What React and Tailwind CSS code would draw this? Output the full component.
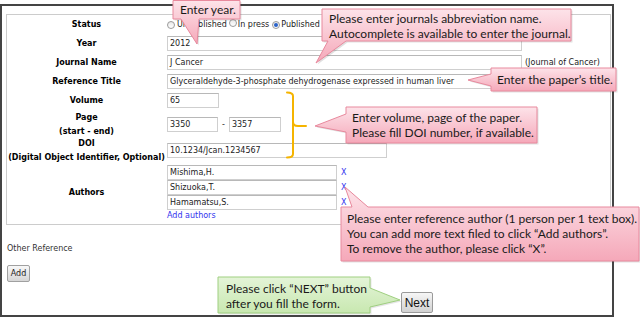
import React from "react";

const dv = "font-['DejaVu_Sans',sans-serif]";

function Input({ w, value }) {
  return (
    <div
      className={`${w} h-[15px] shrink-0 border border-[#cfcfcf] border-t-[#b8b8b8] bg-white pl-[2px] text-[8px] leading-[13px] text-[#222] whitespace-nowrap overflow-hidden`}
    >
      {value}
    </div>
  );
}

function Label({ children }) {
  return (
    <div className="w-[159px] shrink-0 text-center font-bold text-[8px] leading-[14px] text-black">
      {children}
    </div>
  );
}

function Radio({ checked }) {
  return (
    <span className="inline-flex w-[8px] h-[8px] rounded-full border border-[#9a9a9a] bg-gradient-to-b from-[#e8e8e8] to-white items-center justify-center">
      {checked && <span className="w-[4px] h-[4px] rounded-full bg-[#2a62c9]" />}
    </span>
  );
}

function Row({ h, label, children }) {
  return (
    <div className={`flex items-center ${h}`}>
      <Label>{label}</Label>
      <div className="flex items-center pl-[1px]">{children}</div>
    </div>
  );
}

export default function App() {
  const pink = "M173,0.5 H240 V19 H199 L197,44 L181,19 H173 Z";
  const journal = "M322,9 H571 V41 H346 L316,63 L328,41 H322 Z";
  const title = "M491,68 H616 V91 H491 V86 L468,80 L491,74 Z";
  const vol = "M346,107 H537 V143 H346 V132 L315,126 L346,114 Z";
  const auth = "M341,207 H352 L345,187 L368,207 H639 V261 H341 Z";
  const green = "M218,277 H370 V288 L400,300 L370,307 V313 H218 Z";
  const txt = "absolute font-['Lato',sans-serif] text-[12px] leading-[15px] text-[#1a1a1a] whitespace-nowrap";

  return (
    <div className={`relative w-[640px] h-[319px] bg-white overflow-hidden ${dv}`}>
      <div className="mt-[4px] w-[614px] h-[313px] border-2 border-[#444] flex flex-col">
        <div className="ml-[4px] mt-[8px] w-[605px] border border-[#cccccc] flex flex-col">
          <Row h="h-[19px]" label="Status">
            <div className="flex items-center text-[8px] text-[#222]">
              <Radio />
              <span className="ml-[2px]">Unpublished</span>
              <span className="ml-[2px]"><Radio /></span>
              <span className="ml-[1px]">In press</span>
              <span className="ml-[3px]"><Radio checked /></span>
              <span className="ml-[1px]">Published</span>
            </div>
          </Row>
          <Row h="h-[19px]" label="Year">
            <Input w="w-[355px]" value="2012" />
          </Row>
          <Row h="h-[19px]" label="Journal Name">
            <Input w="w-[355px]" value="J Cancer" />
            <span className="ml-[3px] text-[8px] text-[#222]">(Journal of Cancer)</span>
          </Row>
          <Row h="h-[19px]" label="Reference Title">
            <Input
              w="w-[355px]"
              value="Glyceraldehyde-3-phosphate dehydrogenase expressed in human liver"
            />
          </Row>
          <Row h="h-[19px]" label="Volume">
            <Input w="w-[52px]" value="65" />
          </Row>
          <Row
            h="h-[29px]"
            label={
              <>
                Page
                <br />
                (start - end)
              </>
            }
          >
            <Input w="w-[51px]" value="3350" />
            <span className="mx-[4px] text-[8px] text-[#222]">-</span>
            <Input w="w-[52px]" value="3357" />
          </Row>
          <Row
            h="h-[23px]"
            label={
              <>
                DOI
                <br />
                (Digital Object Identifier, Optional)
              </>
            }
          >
            <Input w="w-[220px]" value="10.1234/Jcan.1234567" />
          </Row>
          <div className="flex items-center h-[62px]">
            <Label>Authors</Label>
            <div className="flex flex-col pl-[1px] pt-[1px]">
              {["Mishima,H.", "Shizuoka,T.", "Hamamatsu,S."].map((a) => (
                <div key={a} className="flex items-center">
                  <Input w="w-[170px]" value={a} />
                  <span className="ml-[4px] text-[8px] text-[#3333ee]">X</span>
                </div>
              ))}
              <div className="text-[8px] leading-[12px] text-[#3333ee]">Add authors</div>
            </div>
          </div>
        </div>
        <div className="ml-[5px] mt-[18px] text-[8px] leading-[12px] text-[#333]">Other Reference</div>
        <div className="ml-[5px] mt-[10px] w-[23px] h-[17px] rounded-[2px] border border-[#a0a0a0] bg-gradient-to-b from-[#f8f8f8] to-[#d6d6d6] flex items-center justify-center text-[8px] text-[#222]">
          Add
        </div>
        <div className="ml-[399px] mt-[10px] w-[32px] h-[21px] rounded-[2px] border border-[#9a9a9a] bg-gradient-to-b from-[#f6f6f6] to-[#d2d2d2] flex items-center justify-center font-['Liberation_Sans',sans-serif] text-[12px] text-[#111]">
          Next
        </div>
      </div>

      <svg className="absolute left-0 top-0 pointer-events-none" width="640" height="319" viewBox="0 0 640 319">
        <defs>
          <linearGradient id="pk" x1="0" y1="0" x2="0" y2="1">
            <stop offset="0" stopColor="#fde3e9" />
            <stop offset="1" stopColor="#f5a8b9" />
          </linearGradient>
          <linearGradient id="gr" x1="0" y1="0" x2="0" y2="1">
            <stop offset="0" stopColor="#e4f4d8" />
            <stop offset="1" stopColor="#c8e8b0" />
          </linearGradient>
        </defs>
        {[pink, journal, title, vol, auth].map((d, i) => (
          <g key={i}>
            <path d={d} transform="translate(1.5,1.5)" fill="#000" opacity="0.12" />
            <path d={d} fill="url(#pk)" stroke="#e8899d" strokeWidth="1" />
          </g>
        ))}
        <path d={green} transform="translate(1.5,1.5)" fill="#000" opacity="0.1" />
        <path d={green} fill="url(#gr)" stroke="#9fcf80" strokeWidth="1" />
        <path
          d="M287,92.5 Q293,92.5 293,96 V122 Q293,126 298,126 H306 M293,122 V154 Q293,157.5 287,157.5"
          fill="none"
          stroke="#f5b400"
          strokeWidth="2"
          strokeLinecap="round"
        />
      </svg>

      <div className={`${txt} left-[180px] top-[2px]`}>Enter year.</div>
      <div className={`${txt} left-[329px] top-[11px]`}>
        Please enter journals abbreviation name.
        <br />
        Autocomplete is available to enter the journal.
      </div>
      <div className={`${txt} left-[497px] top-[72px]`}>Enter the paper’s title.</div>
      <div className={`${txt} left-[352px] top-[110px]`}>
        Enter volume, page of the paper.
        <br />
        Please fill DOI number, if available.
      </div>
      <div className={`${txt} left-[347px] top-[211px]`}>
        Please enter reference author (1 person per 1 text box).
        <br />
        You can add more text filed to click “Add authors”.
        <br />
        To remove the author, please click “X”.
      </div>
      <div className={`${txt} left-[226px] top-[281px]`}>
        Please click “NEXT” button
        <br />
        after you fill the form.
      </div>
    </div>
  );
}
